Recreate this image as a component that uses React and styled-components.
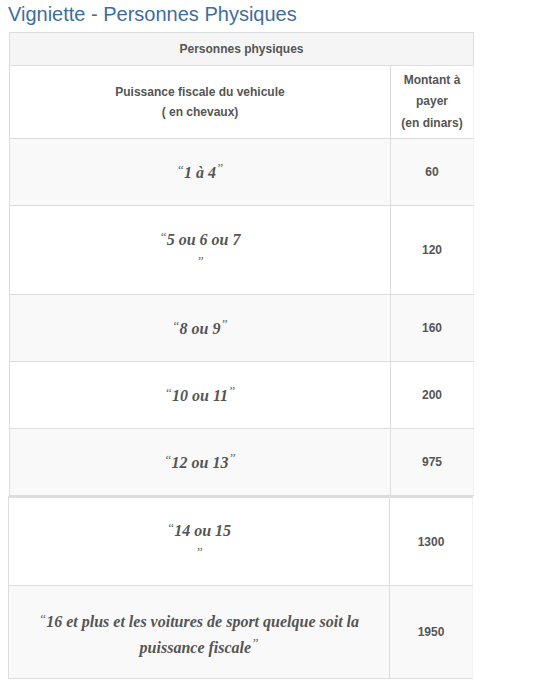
import React from "react";
import styled, { createGlobalStyle } from "styled-components";

const rowsTop = [
  { label: "1 à 4", amount: "60", height: 67 },
  { label: "5 ou 6 ou 7", amount: "120", height: 89, breakQuote: true },
  { label: "8 ou 9", amount: "160", height: 67 },
  { label: "10 ou 11", amount: "200", height: 67 },
  { label: "12 ou 13", amount: "975", height: 67 },
];

const rowsBottom = [
  { label: "14 ou 15", amount: "1300", height: 88, breakQuote: true },
  {
    label: "16 et plus et les voitures de sport quelque soit la puissance fiscale",
    amount: "1950",
    height: 93,
  },
];

function Label({ row }) {
  return (
    <>
      <Quote>“</Quote>
      {row.label}
      {row.breakQuote && <br />}
      <Quote $close>”</Quote>
    </>
  );
}

export default function App() {
  return (
    <Page>
      <GlobalStyle />
      <Title>Vigniette - Personnes Physiques</Title>
      <Table $shift={1}>
        <colgroup>
          <col style={{ width: 381 }} />
          <col style={{ width: 83 }} />
        </colgroup>
        <thead>
          <tr>
            <TopHead colSpan={2}>Personnes physiques</TopHead>
          </tr>
          <tr>
            <SubHead>
              Puissance fiscale du vehicule
              <br />( en chevaux)
            </SubHead>
            <SubHead $tall>
              Montant à
              <br />
              payer
              <br />
              (en dinars)
            </SubHead>
          </tr>
        </thead>
        <tbody>
          {rowsTop.map((row, i) => (
            <Row key={row.label} $striped={i % 2 === 0}>
              <LabelCell $h={row.height} $pt={row.breakQuote ? 5 : 2}>
                <Label row={row} />
              </LabelCell>
              <AmountCell>{row.amount}</AmountCell>
            </Row>
          ))}
        </tbody>
      </Table>
      <Table $shift={0} $second>
        <colgroup>
          <col style={{ width: 381 }} />
          <col style={{ width: 83 }} />
        </colgroup>
        <tbody>
          {rowsBottom.map((row, i) => (
            <Row key={row.label} $striped={i % 2 === 1}>
              <LabelCell $h={row.height} $pt={5} $wide={!row.breakQuote}>
                <Label row={row} />
              </LabelCell>
              <AmountCell>{row.amount}</AmountCell>
            </Row>
          ))}
        </tbody>
      </Table>
    </Page>
  );
}

const GlobalStyle = createGlobalStyle`
  body {
    margin: 0;
    background: #ffffff;
    font-family: "Liberation Sans", Arial, sans-serif;
  }
`;

const Page = styled.div`
  padding: 3px 0 16px 8px;
`;

const Title = styled.h1`
  margin: 0 0 6px;
  font-size: 20px;
  line-height: 23px;
  font-weight: normal;
  color: #3e6d9c;
`;

const Table = styled.table`
  margin-left: ${(p) => p.$shift}px;
  width: 464px;
  table-layout: fixed;
  border-collapse: collapse;
  border-left: 1px solid #dddddd;
  border-top: ${(p) => (p.$second ? "2px solid #dddddd" : "1px solid #dddddd")};
  border-bottom: 1px solid #dddddd;
  border-right: 1px solid #f3f3f3;
  color: #555555;
`;

const TopHead = styled.th`
  height: 32px;
  padding: 0 8px;
  background: #f5f5f5;
  border: 1px solid #dddddd;
  font-size: 12px;
  font-weight: bold;
  text-align: center;
  vertical-align: middle;
`;

const SubHead = styled.th`
  height: 72px;
  padding: 0 6px;
  background: #ffffff;
  border-right: 1px solid #dddddd;
  border-bottom: 1px solid #dddddd;
  font-size: 12px;
  line-height: ${(p) => (p.$tall ? "21.5px" : "20px")};
  font-weight: bold;
  text-align: center;
  vertical-align: middle;
  &:last-child {
    border-right-color: #f3f3f3;
  }
`;

const Row = styled.tr`
  background: ${(p) => (p.$striped ? "#f9f9f9" : "#ffffff")};
  border-bottom: 1px solid #dddddd;
`;

const LabelCell = styled.td`
  height: ${(p) => p.$h - 1 - p.$pt}px;
  padding: ${(p) => p.$pt}px ${(p) => (p.$wide ? "26px" : "8px")} 0;
  border-right: 1px solid #dddddd;
  font-family: "Liberation Serif", "Times New Roman", serif;
  font-style: italic;
  font-weight: bold;
  font-size: 16px;
  line-height: 26px;
  text-align: center;
  vertical-align: middle;
`;

const Quote = styled.span`
  font-size: 13px;
  font-weight: normal;
  vertical-align: ${(p) => (p.$close ? "6px" : "4px")};
  line-height: 0;
  color: #666666;
`;

const AmountCell = styled.td`
  padding: 0 4px;
  font-size: 12px;
  font-weight: bold;
  text-align: center;
  vertical-align: middle;
`;
